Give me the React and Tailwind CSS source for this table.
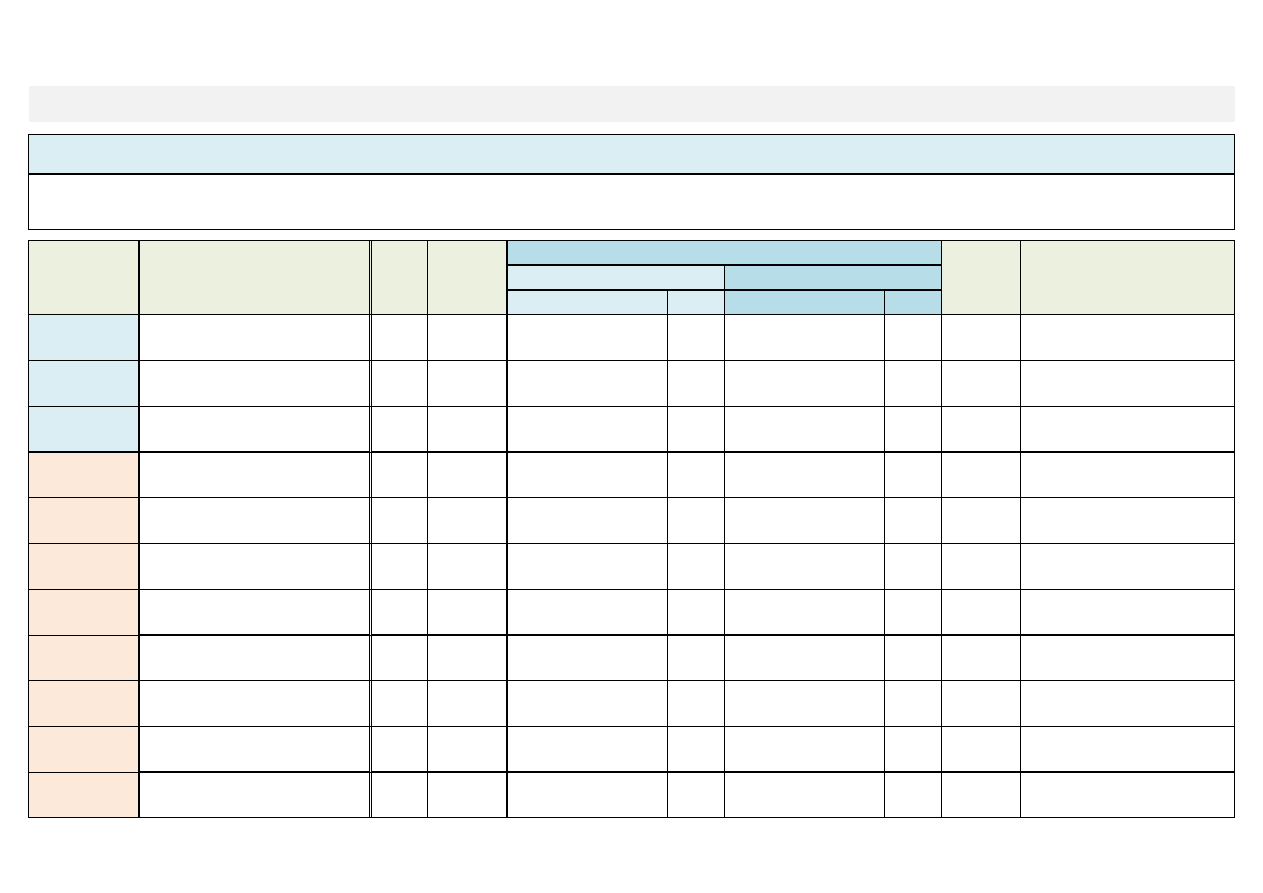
import React from "react";

// Column template shared by the header and every body row
const cols = "grid grid-cols-[111px_232px_56px_80px_160px_57px_160px_57px_79px_214px]";

// Body rows: height and whether the bottom rule is heavy
const rows = [
  { h: "h-[46px]", tint: "bg-[#daeef3]", heavy: false, heavyFirst: false },
  { h: "h-[46px]", tint: "bg-[#daeef3]", heavy: false, heavyFirst: false },
  { h: "h-[46px]", tint: "bg-[#daeef3]", heavy: true, heavyFirst: true },
  { h: "h-[45px]", tint: "bg-[#fde9d9]", heavy: false, heavyFirst: false },
  { h: "h-[46px]", tint: "bg-[#fde9d9]", heavy: false, heavyFirst: false },
  { h: "h-[46px]", tint: "bg-[#fde9d9]", heavy: false, heavyFirst: false },
  { h: "h-[46px]", tint: "bg-[#fde9d9]", heavy: true, heavyFirst: false },
  { h: "h-[45px]", tint: "bg-[#fde9d9]", heavy: false, heavyFirst: false },
  { h: "h-[46px]", tint: "bg-[#fde9d9]", heavy: false, heavyFirst: false },
  { h: "h-[46px]", tint: "bg-[#fde9d9]", heavy: true, heavyFirst: false },
  { h: "h-[45px]", tint: "bg-[#fde9d9]", heavy: false, heavyFirst: false },
];

const BodyRow = ({ row }) => {
  const b = row.heavy ? "border-b-2" : "border-b";
  const b1 = row.heavyFirst ? "border-b-2" : "border-b";
  return (
    <div className={`${cols} ${row.h}`}>
      <div className={`${row.tint} border-black border-r-2 ${b1}`} />
      <div className={`border-black border-double border-r-[3px] ${b}`} />
      <div className={`border-black border-r ${b}`} />
      <div className={`border-black border-r-2 ${b}`} />
      <div className={`border-black border-r ${b}`} />
      <div className={`border-black border-r ${b}`} />
      <div className={`border-black border-r ${b}`} />
      <div className={`border-black border-r ${b}`} />
      <div className={`border-black border-r ${b}`} />
      <div className={`border-black border-r ${b}`} />
    </div>
  );
};

const App = () => {
  return (
    <div className="min-h-screen bg-white pt-[86px] font-['Liberation_Sans',sans-serif]">
      {/* Title strip */}
      <div className="ml-[29px] w-[1206px] h-[36px] bg-[#f2f2f2]" />

      {/* Caption box */}
      <div className="ml-[28px] mt-[12px] w-[1207px] h-[96px] border border-black flex flex-col">
        <div className="h-[40px] bg-[#daeef3] border-b-2 border-black" />
        <div className="flex-1" />
      </div>

      {/* Main table */}
      <div className="ml-[28px] mt-[10px] w-[1207px] border-l border-t border-black">
        <div className={`${cols} grid-rows-[25px_25px_24px]`}>
          <div className="row-span-3 col-start-1 row-start-1 bg-[#ebf1de] border-black border-r-2 border-b" />
          <div className="row-span-3 col-start-2 row-start-1 bg-[#ebf1de] border-black border-double border-r-[3px] border-b" />
          <div className="row-span-3 col-start-3 row-start-1 bg-[#ebf1de] border-black border-r border-b" />
          <div className="row-span-3 col-start-4 row-start-1 bg-[#ebf1de] border-black border-r-2 border-b" />
          <div className="col-span-4 col-start-5 row-start-1 bg-[#b7dee8] border-black border-r border-b-2" />
          <div className="row-span-3 col-start-9 row-start-1 bg-[#ebf1de] border-black border-r border-b" />
          <div className="row-span-3 col-start-10 row-start-1 bg-[#ebf1de] border-black border-r border-b" />

          <div className="col-span-2 col-start-5 row-start-2 bg-[#daeef3] border-black border-r border-b-2" />
          <div className="col-span-2 col-start-7 row-start-2 bg-[#b7dee8] border-black border-r border-b-2" />

          <div className="col-start-5 row-start-3 bg-[#daeef3] border-black border-r border-b" />
          <div className="col-start-6 row-start-3 bg-[#daeef3] border-black border-r border-b" />
          <div className="col-start-7 row-start-3 bg-[#b7dee8] border-black border-r border-b" />
          <div className="col-start-8 row-start-3 bg-[#b7dee8] border-black border-r border-b" />
        </div>

        {rows.map((row, i) => (
          <BodyRow key={i} row={row} />
        ))}
      </div>
    </div>
  );
};

export default App;
